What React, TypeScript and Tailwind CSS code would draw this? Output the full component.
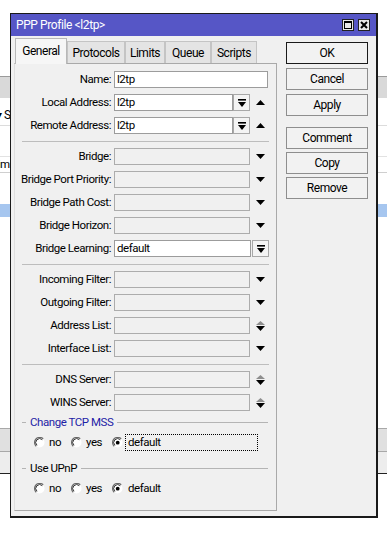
import React from "react";

function DownTri({ color = "#000" }: { color?: string }) {
  return (
    <svg width="9" height="5" viewBox="0 0 9 5">
      <path d="M0 0H9L4.5 5Z" fill={color} />
    </svg>
  );
}
function UpTri({ color = "#000" }: { color?: string }) {
  return (
    <svg width="9" height="5" viewBox="0 0 9 5">
      <path d="M0 5H9L4.5 0Z" fill={color} />
    </svg>
  );
}

function ComboGlyph() {
  return (
    <svg width="8" height="8" viewBox="0 0 8 8">
      <rect x="0" y="0" width="8" height="1.6" fill="#000" />
      <path d="M0 3H8L4 8Z" fill="#000" />
    </svg>
  );
}

function ComboBtn() {
  return (
    <div className="flex h-[17px] w-[17px] items-center justify-center border border-[#a8a8a8] bg-[#f4f4f4]">
      <ComboGlyph />
    </div>
  );
}

function Radio({ checked }: { checked?: boolean }) {
  return (
    <svg width="11" height="11" viewBox="0 0 11 11">
      <circle cx="5.5" cy="5.5" r="5" fill="#fff" />
      <path d="M2.2 9.2 A5 5 0 0 1 9.2 1.8" fill="none" stroke="#6a6a6a" strokeWidth="1.3" />
      <path d="M3 8.3 A3.8 3.8 0 0 1 8.3 2.7" fill="none" stroke="#222" strokeWidth="0.9" />
      {checked && <circle cx="5.7" cy="5.7" r="1.9" fill="#000" />}
    </svg>
  );
}

function Label({ children }: { children: React.ReactNode }) {
  return (
    <div className="w-[99px] shrink-0 whitespace-nowrap pr-[3px] text-right">{children}</div>
  );
}

function Field({
  value,
  disabled,
  w,
}: {
  value?: string;
  disabled?: boolean;
  w: string;
}) {
  return (
    <div
      className={`flex h-[17px] items-center border pl-[2px] ${w} ${
        disabled ? "border-[#acacac] bg-[#f0f0f0]" : "border-[#9c9c9c] bg-white"
      }`}
    >
      {value}
    </div>
  );
}

function Sep() {
  return <div className="mx-[7px] h-[2px] border-b border-[#bdbdbd]" />;
}

function Row({ children }: { children: React.ReactNode }) {
  return <div className="flex h-[17px] items-center">{children}</div>;
}

function ArrowCell({ children }: { children: React.ReactNode }) {
  return <div className="flex w-[18px] flex-col items-center justify-center gap-[1px]">{children}</div>;
}

function DisabledRow({ label, kind }: { label: string; kind: "down" | "updown" }) {
  return (
    <Row>
      <Label>{label}</Label>
      <Field disabled w="w-[136px]" />
      <div className="ml-[1px]">
        <ArrowCell>
          {kind === "down" ? (
            <DownTri />
          ) : (
            <>
              <svg width="9" height="4" viewBox="0 0 9 4">
                <path d="M0 4H9L4.5 0Z" fill="#8e8e8e" />
              </svg>
              <DownTri />
            </>
          )}
        </ArrowCell>
      </div>
    </Row>
  );
}

function GroupLabel({ text, blue }: { text: string; blue?: boolean }) {
  return (
    <div className="flex h-[11px] items-center">
      <div className="ml-[7px] h-px w-[4px] bg-[#b4b4b4]" />
      <span className={`px-[4px] ${blue ? "text-[#1e22a6]" : ""}`}>{text}</span>
      <div className="mr-[8px] h-px flex-1 bg-[#b4b4b4]" />
    </div>
  );
}

function RadioRow({ focus }: { focus?: boolean }) {
  return (
    <div className="flex h-[17px] items-center pl-[19px]">
      <div className="flex w-[37px] items-center gap-[4px]">
        <Radio />
        <span>no</span>
      </div>
      <div className="flex w-[41px] items-center gap-[4px]">
        <Radio />
        <span>yes</span>
      </div>
      <div className="flex items-center gap-[2px]">
        <Radio checked />
        <span
          className={`flex h-[17px] w-[133px] items-center pl-[2px] ${
            focus ? "border border-dotted border-black" : "border border-transparent"
          }`}
        >
          default
        </span>
      </div>
    </div>
  );
}

function Btn({ children, def }: { children: React.ReactNode; def?: boolean }) {
  return (
    <div
      className={`flex h-[22px] w-[82px] items-center justify-center border text-[12px] ${
        def ? "border-[#1a1a1a]" : "border-[#8e8e8e]"
      } bg-[#f2f2f2]`}
    >
      {children}
    </div>
  );
}

function Tab({ label, w, selected }: { label: string; w: string; selected?: boolean }) {
  return (
    <div
      className={`flex items-center justify-center border border-b-0 text-[12px] ${w} ${
        selected
          ? "relative z-10 -mb-px h-[26px] border-[#b8b8b8] bg-[#f6f6f6] pb-[2px]"
          : "h-[22px] border-[#c4c4c4] bg-[#e4e4e4]"
      }`}
    >
      {label}
    </div>
  );
}

function BackgroundWindow() {
  return (
    <div className="absolute left-0 top-[76px] flex h-[398px] w-[387px] flex-col border-b border-[#222] bg-white">
      <div className="h-[22px] border-t border-[#9a9a9a] bg-[#d9d9d9]" />
      <div className="flex h-[28px] items-center border-b border-[#dcdcdc]">
        <span className="ml-[-4px] mt-[6px] text-[12px]">▾ S</span>
      </div>
      <div className="h-[31px] border-b border-[#e2e2e2]" />
      <div className="flex h-[16px] items-end border-b border-[#cfcfcf]">
        <span className="ml-[-8px] pb-[2px]">Limit</span>
      </div>
      <div className="h-[31px]" />
      <div className="h-[13px] bg-[#a6c6ef]" />
      <div className="flex-1" />
      <div className="h-[24px] border-y border-[#a8a8a8] bg-[#e0e0e0]" />
      <div className="h-[21px] bg-[#ededed]" />
    </div>
  );
}

function Dialog() {
  return (
    <div className="absolute left-[10px] top-[13px] flex h-[505px] w-[368px] flex-col border border-b-2 border-r-2 border-[#1a1a1a] bg-[#f0f0f0]">
      {/* title bar */}
      <div className="flex h-[22px] items-center bg-[#5656c6] pl-[5px] pr-[6px]">
        <span className="flex-1 text-[12px] tracking-[-0.4px] text-white">PPP Profile &lt;l2tp&gt;</span>
        <div className="flex items-center gap-[4px]">
          <div className="flex h-[12px] w-[12px] items-center justify-center border border-[#222] bg-[#e8e8e8]">
            <div className="h-[8px] w-[8px] border border-t-2 border-black" />
          </div>
          <div className="flex h-[12px] w-[12px] items-center justify-center border border-[#222] bg-[#e8e8e8]">
            <svg width="8" height="8" viewBox="0 0 8 8">
              <path d="M1 1L7 7M7 1L1 7" stroke="#000" strokeWidth="2" />
            </svg>
          </div>
        </div>
      </div>
      {/* body */}
      <div className="flex flex-1 pl-[3px]">
        <div className="flex w-[263px] flex-col pt-[2px]">
          <div className="flex h-[25px] items-end pl-[1px]">
            <Tab label="General" w="w-[52px]" selected />
            <Tab label="Protocols" w="w-[58px]" />
            <Tab label="Limits" w="w-[40px]" />
            <Tab label="Queue" w="w-[46px]" />
            <Tab label="Scripts" w="w-[46px]" />
          </div>
          <div className="mb-[5px] flex flex-1 flex-col gap-[6px] border border-[#a9a9a9] border-l-[#dedede] bg-[#f0f0f0] pt-[7px]">
            <Row>
              <Label>Name:</Label>
              <Field value="l2tp" w="w-[154px]" />
            </Row>
            <Row>
              <Label>Local Address:</Label>
              <Field value="l2tp" w="w-[119px]" />
              <ComboBtn />
              <div className="ml-[1px]">
                <ArrowCell>
                  <UpTri />
                </ArrowCell>
              </div>
            </Row>
            <Row>
              <Label>Remote Address:</Label>
              <Field value="l2tp" w="w-[119px]" />
              <ComboBtn />
              <div className="ml-[1px]">
                <ArrowCell>
                  <UpTri />
                </ArrowCell>
              </div>
            </Row>
            <Sep />
            <DisabledRow label="Bridge:" kind="down" />
            <DisabledRow label="Bridge Port Priority:" kind="down" />
            <DisabledRow label="Bridge Path Cost:" kind="down" />
            <DisabledRow label="Bridge Horizon:" kind="down" />
            <Row>
              <Label>Bridge Learning:</Label>
              <Field value="default" w="w-[137px]" />
              <div className="ml-[1px]">
                <ComboBtn />
              </div>
            </Row>
            <Sep />
            <DisabledRow label="Incoming Filter:" kind="down" />
            <DisabledRow label="Outgoing Filter:" kind="down" />
            <DisabledRow label="Address List:" kind="updown" />
            <DisabledRow label="Interface List:" kind="down" />
            <Sep />
            <DisabledRow label="DNS Server:" kind="updown" />
            <DisabledRow label="WINS Server:" kind="updown" />
            <GroupLabel text="Change TCP MSS" blue />
            <RadioRow focus />
            <div className="mt-[6px]">
              <GroupLabel text="Use UPnP" />
            </div>
            <RadioRow />
          </div>
        </div>
        <div className="ml-[9px] flex flex-col pt-[6px]">
          <div className="flex flex-col gap-[4px]">
            <Btn def>OK</Btn>
            <Btn>Cancel</Btn>
            <Btn>Apply</Btn>
          </div>
          <div className="mt-[11px] flex flex-col gap-[3px]">
            <Btn>Comment</Btn>
            <Btn>Copy</Btn>
            <Btn>Remove</Btn>
          </div>
        </div>
      </div>
    </div>
  );
}

export default function App() {
  return (
    <div className="relative h-[534px] w-[387px] overflow-hidden bg-white font-['Roboto','Liberation_Sans',sans-serif] text-[11.5px] leading-none tracking-[-0.45px] text-black">
      <BackgroundWindow />
      <Dialog />
    </div>
  );
}
